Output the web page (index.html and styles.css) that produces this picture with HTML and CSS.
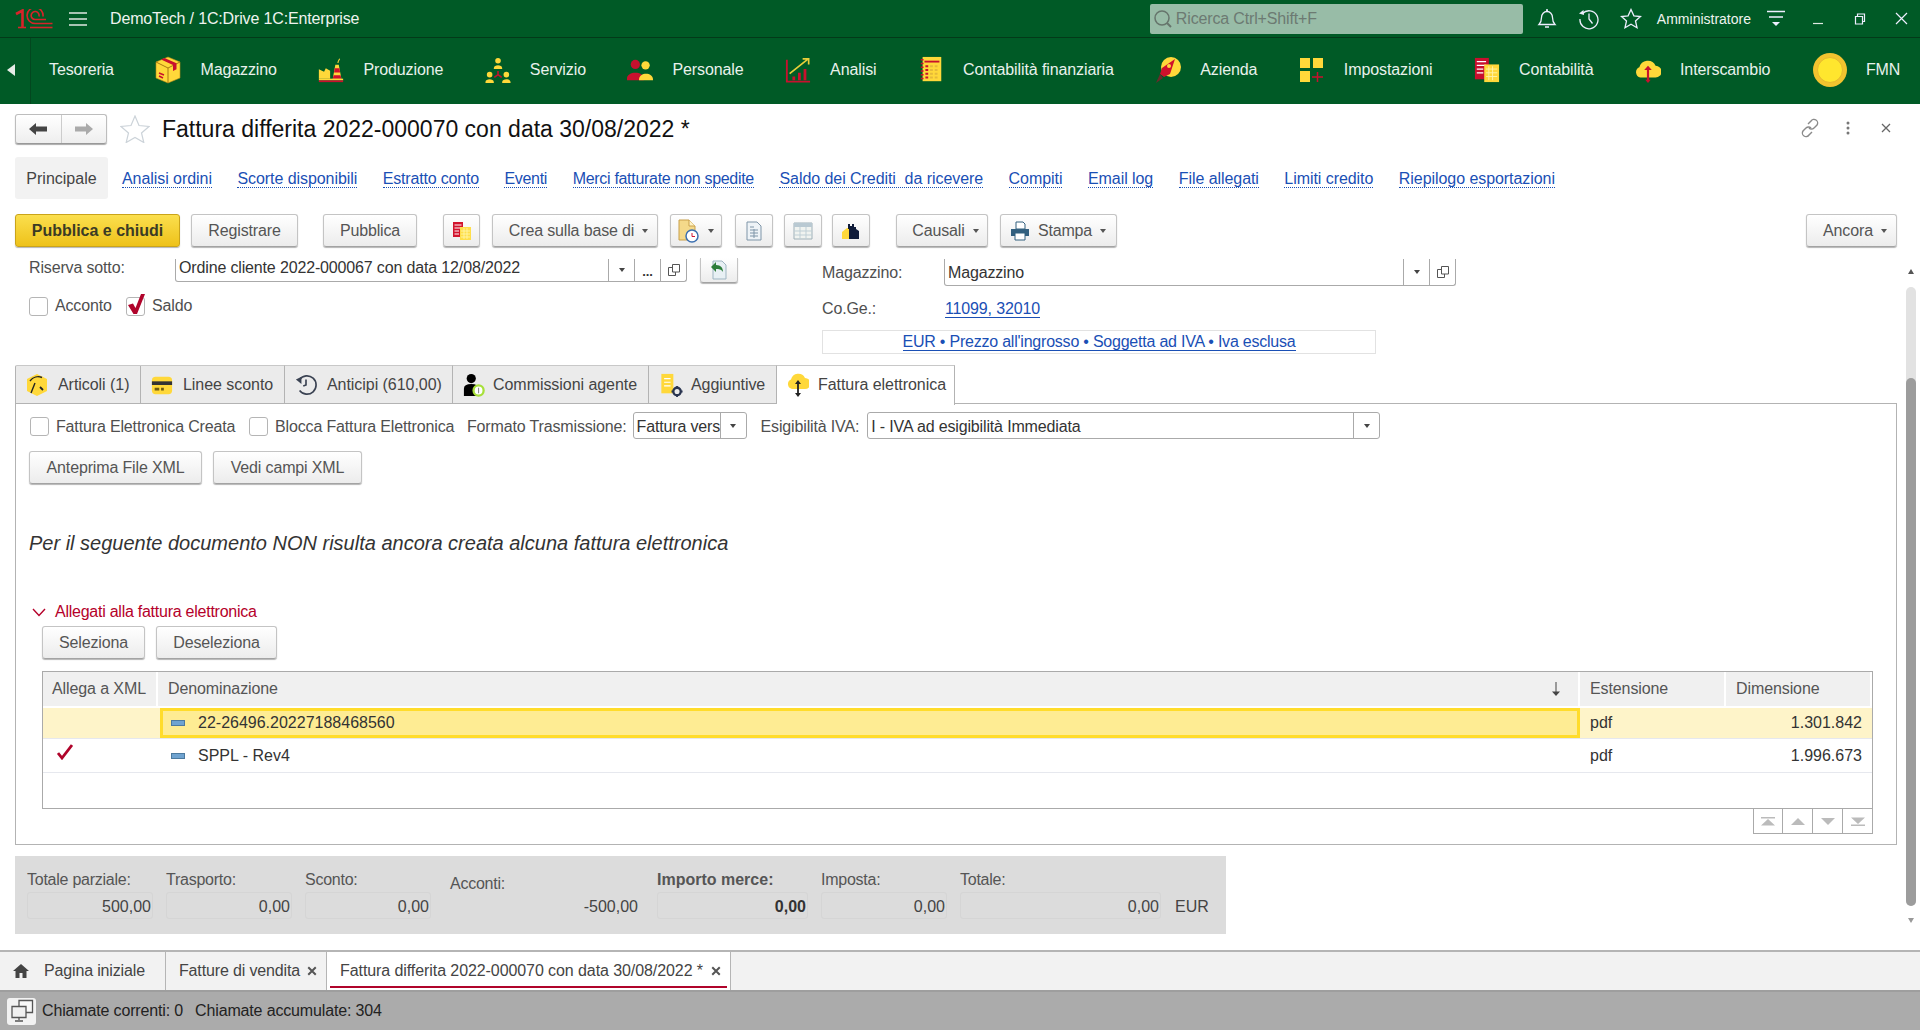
FILE: index.html
```html
<!DOCTYPE html>
<html lang="it">
<head>
<meta charset="utf-8">
<title>Fattura differita</title>
<link rel="stylesheet" href="styles.css">
</head>
<body>
<header class="topbar">
  <svg class="logo" viewBox="0 0 38 20" fill="none" stroke="#d8232a" stroke-width="1.600"><path d="M1 5 7.500 1.500V18" stroke-width="2.600"/><path d="M3 18.500H11" stroke-width="1.600"/><path d="M28 7.500A8 8 0 1 0 20 14.500H37.500"/><path d="M24 7.500A4 4 0 1 0 20 10.500H31"/><path d="M15 18.500H37.500"/></svg>
  <svg class="burger" viewBox="0 0 18 14" stroke="#dfe8e2" stroke-width="1.500"><path d="M0 1H18M0 7H18M0 13H18"/></svg>
  <span class="app-title">DemoTech / 1C:Drive 1C:Enterprise</span>
  <div class="search">
    <svg class="search-ico" viewBox="0 0 20 20" fill="none" stroke="#66756c" stroke-width="1.500"><circle cx="9" cy="9" r="7"/><path d="m14 14 4 4" stroke-width="2"/></svg>
    <span>Ricerca Ctrl+Shift+F</span>
  </div>
  <svg class="top-ico bell" viewBox="0 0 20 20" fill="none" stroke="#eef" stroke-width="1.300"><path d="M2 15.500c2-2 2.500-3 2.500-7C4.500 5 7 2.500 10 2.500S15.500 5 15.500 8.500c0 4 .5 5 2.500 7ZM9 1h2M8 18h4"/></svg>
  <svg class="top-ico hist" viewBox="0 0 22 22" fill="none" stroke="#eef" stroke-width="1.300"><path d="M4.500 5.500A9 9 0 1 1 2 11M11 5.500V11l3.500 4.500"/><path d="M1 5.500 5.500 2l.5 5Z" fill="#eef" stroke="none"/></svg>
  <svg class="top-ico tstar" viewBox="0 0 22 22" fill="none" stroke="#eef" stroke-width="1.300"><path d="m11 1.500 2.900 6.300 6.600.7-5 4.500 1.500 6.800L11 16.300l-6 3.500 1.500-6.800-5-4.500 6.600-.7Z"/></svg>
  <span class="user">Amministratore</span>
  <svg class="top-ico filt" viewBox="0 0 18 18" stroke="#eef" stroke-width="1.300"><path d="M0 1.500H18M2 7H16"/><path d="M5 12H13L9 16Z" fill="#eef" stroke="none"/></svg>
  <svg class="win-ico min" viewBox="0 0 12 12" stroke="#dfe8e2" stroke-width="1.200"><path d="M1 10.500H11"/></svg>
  <svg class="win-ico rest" viewBox="0 0 12 12" fill="none" stroke="#eef" stroke-width="1.200"><path d="M1.500 3.500H8.500V11H1.500ZM3.500 3.500V1H10.500V8.500H8.500"/></svg>
  <svg class="win-ico close" viewBox="0 0 13 13" stroke="#eef" stroke-width="1.200"><path d="m1 1 11 11M12 1 1 12"/></svg>
</header>

<nav class="nav">
  <div class="nav-back"><span class="tri-left"></span></div>
  <a class="nav-item first"><span>Tesoreria</span></a>
  <a class="nav-item">
    <svg viewBox="0 0 26 28"><path d="M13 1 25 6v16l-12 5L1 22V6Z" fill="#ffd83a" stroke="#b98a1a" stroke-width=".6"/><path d="M13 12v15M1 6l12 6 12-6" stroke="#a97a10" fill="none"/><path d="m6 3.500 12 5.500 3.500-1.800L9.500 2ZM18 9v6l3.500-1.800V7.200Z" fill="#c8102e"/><path d="M4 17l5 2M4 20l4 2" stroke="#c8102e" stroke-width="1.500"/></svg>
    <span>Magazzino</span></a>
  <a class="nav-item">
    <svg viewBox="0 0 30 30"><path d="M1 14l6 3 2-4 5 3v9H1Z" fill="#ffd83a"/><path d="M17 25 20 9h4l3 16Z" fill="#ffd83a"/><path d="M19.300 13h5.400l.8 5h-7ZM18 21h8l1 4H17Z" fill="#d0102c"/><path d="M23 7c0-2 1-3 2-5" stroke="#ffd83a" stroke-width="1.200" fill="none"/><path d="M1 25H29V27H1Z" fill="#ffd83a"/><path d="M1 27H29V29H1Z" fill="#c8102e"/></svg>
    <span>Produzione</span></a>
  <a class="nav-item">
    <svg viewBox="0 0 28 28"><g fill="#ffd83a"><circle cx="14" cy="4" r="3"/><path d="M9.500 12c0-4 9-4 9 0v1h-9Z"/><circle cx="5" cy="19" r="3"/><path d="M.5 27c0-4 9-4 9 0v1h-9Z"/><circle cx="23" cy="19" r="3"/><path d="M18.500 27c0-4 9-4 9 0v1h-9Z"/></g><path d="M14 15v4l-4 3M14 19l4 3" stroke="#c8102e" stroke-width="1.600" fill="none"/></svg>
    <span>Servizio</span></a>
  <a class="nav-item">
    <svg viewBox="0 0 28 26"><circle cx="9" cy="7" r="5" fill="#c8102e"/><path d="M0 22c0-8 18-8 18 0v2H0Z" fill="#c8102e"/><circle cx="20" cy="8" r="4.500" fill="#ffd83a"/><path d="M13 23c0-8 15-8 15 0v1H13Z" fill="#ffd83a"/></svg>
    <span>Personale</span></a>
  <a class="nav-item">
    <svg viewBox="0 0 28 28"><path d="M2 3V26.500H27" stroke="#c8102e" stroke-width="2" fill="none"/><path d="M5 18 25 2M19 2h6.500v6" stroke="#e8cf3a" stroke-width="1.800" fill="none"/><path d="M8 21h3v4H8ZM14 17h3v8h-3ZM20 13h3v12h-3Z" fill="#c8102e"/></svg>
    <span>Analisi</span></a>
  <a class="nav-item">
    <svg viewBox="0 0 24 30"><path d="M3 1H23V27H3Z" fill="#ffd83a"/><path d="M1 4H4M1 8H4M1 12H4M1 16H4M1 20H4M1 24H4" stroke="#c8102e" stroke-width="1.600"/><path d="M5 5H21V7H5Z" fill="#c8102e"/><path d="M6 10h3v2H6ZM6 14h3v2H6ZM6 18h3v2H6ZM6 22h3v2H6Z" fill="#c8102e"/><path d="M11 10h3v2h-3ZM16 10h3v2h-3ZM11 14h3v2h-3ZM16 14h3v2h-3ZM11 18h3v2h-3ZM16 18h3v2h-3ZM11 22h3v2h-3ZM16 22h3v2h-3Z" fill="#e5b93a"/></svg>
    <span>Contabilità finanziaria</span></a>
  <a class="nav-item">
    <svg viewBox="0 0 26 28"><circle cx="16" cy="11" r="10" fill="#ffd83a"/><path d="M20 3 7 12l-2 6 4 3 6-3Z" fill="#d0102c"/><circle cx="14" cy="10" r="2" fill="#ffd83a"/><path d="M5 18 1 27l7-5Z" fill="#6a2b2b"/></svg>
    <span>Azienda</span></a>
  <a class="nav-item">
    <svg viewBox="0 0 26 26"><path d="M1 1H11V11H1ZM14 1H24V11H14ZM1 14H11V25H1Z" fill="#ffd83a"/><path d="M18.500 15V25M13 20H24" stroke="#c8102e" stroke-width="1.500"/></svg>
    <span>Impostazioni</span></a>
  <a class="nav-item">
    <svg viewBox="0 0 28 28"><path d="M1 1H16V24H1Z" fill="#c8102e"/><path d="M3 5H13M3 9H13M3 13H10M3 17H10" stroke="#fff" stroke-width="1.400"/><path d="M11 8H27V27H11Z" fill="#ffd83a"/><path d="M13 13H25M13 17H25M13 21H25M16 10V25M20 10V25" stroke="#fff3a8" stroke-width="1"/></svg>
    <span>Contabilità</span></a>
  <a class="nav-item">
    <svg viewBox="0 0 24 24"><path d="M5 19A5 5 0 0 1 4 9.500 8 8 0 0 1 19 8a5.500 5.500 0 0 1 0 11Z" fill="#ffd83a"/><path d="M12 10V23" stroke="#c8102e" stroke-width="2"/><path d="M8.500 12 12 8l3.500 4ZM9.500 21h5l-2.500 3Z" fill="#c8102e"/></svg>
    <span>Interscambio</span></a>
  <a class="nav-item coin">
    <svg viewBox="0 0 36 36"><circle cx="18" cy="18" r="17" fill="#f2c32f"/><circle cx="18" cy="18" r="12.500" fill="#ffe62e" stroke="#e5b92f"/></svg>
    <span>FMN</span></a>
</nav>

<main class="page">
  <div class="title-row">
    <div class="hist-nav">
      <button class="hist-btn"><svg viewBox="0 0 18 14"><path d="M0 7 7 1v3.500H18v5H7V13Z" fill="#444"/></svg></button>
      <button class="hist-btn"><svg viewBox="0 0 18 14"><path d="M18 7 11 1v3.500H0v5H11V13Z" fill="#aaa"/></svg></button>
    </div>
    <svg class="fav" viewBox="0 0 30 28" fill="none" stroke="#ccd3d9" stroke-width="1.200"><path d="m15 1 4 9.500 10 1-7.500 6.500 2.300 9.500L15 22.500 6.200 27.500 8.500 18 1 11.500l10-1Z"/></svg>
    <h1 class="doc-title">Fattura differita 2022-000070 con data 30/08/2022 *</h1>
    <div class="title-tools">
      <svg class="tt-link" viewBox="0 0 20 20" fill="none" stroke="#8a8a8a" stroke-width="1.400"><path d="m8 6 3-3a3.500 3.500 0 0 1 6 4l-3 3a3.500 3.500 0 0 1-5 0"/><path d="m12 14-3 3a3.500 3.500 0 0 1-6-4l3-3a3.500 3.500 0 0 1 5 0"/></svg>
      <svg class="tt-dots" viewBox="0 0 4 14" fill="#777"><circle cx="2" cy="2" r="1.500"/><circle cx="2" cy="7" r="1.500"/><circle cx="2" cy="12" r="1.500"/></svg>
      <svg class="tt-x" viewBox="0 0 10 10" stroke="#666" stroke-width="1.300"><path d="m1 1 8 8M9 1 1 9"/></svg>
    </div>
  </div>

  <div class="section-links">
    <span class="section-current">Principale</span>
    <a class="sec">Analisi ordini</a>
    <a class="sec">Scorte disponibili</a>
    <a class="sec mid">Estratto conto</a>
    <a class="sec tight">Eventi</a>
    <a class="sec tight">Merci fatturate non spedite</a>
    <a class="sec">Saldo dei Crediti  da ricevere</a>
    <a class="sec">Compiti</a>
    <a class="sec">Email log</a>
    <a class="sec">File allegati</a>
    <a class="sec">Limiti credito</a>
    <a class="sec">Riepilogo esportazioni</a>
  </div>

  <div class="toolbar">
    <button class="btn primary">Pubblica e chiudi</button>
    <button class="btn b-reg">Registrare</button>
    <button class="btn b-pub">Pubblica</button>
    <button class="btn icon b-ic1">
      <svg viewBox="0 0 20 20"><path d="M1 1H11V16H1Z" fill="#d2142e"/><path d="M2.500 4H9.500M2.500 7H9.500M2.500 10H7M2.500 13H7" stroke="#fff"/><path d="M8 6H19V19H8Z" fill="#ffdf4a"/><path d="M9 10H18M9 13H18M9 16H18M12 7V18M15 7V18" stroke="#fff6b0" stroke-width=".8"/></svg>
    </button>
    <button class="btn drop crea">Crea sulla base di<i class="caret"></i></button>
    <button class="btn drop ico-drop">
      <svg viewBox="0 0 22 24"><path d="M1 1H11L17 7V21H1Z" fill="#f4d98a" stroke="#c9a04a"/><path d="M11 1V7H17" fill="#fff3c8" stroke="#c9a04a"/><circle cx="14" cy="17" r="6" fill="#fff" stroke="#3b6fb0" stroke-width="1.500"/><path d="M14 14v3.500h3" stroke="#d2142e" fill="none"/></svg>
      <i class="caret"></i></button>
    <button class="btn icon b-ic2">
      <svg viewBox="0 0 18 20" fill="none" stroke="#7f95a8"><path d="M2 1H12L16 5V19H2Z" fill="#eef3f7"/><path d="M5 6H9M5 9H13M5 12H13M5 15H13M9 8V17"/></svg>
    </button>
    <button class="btn icon">
      <svg viewBox="0 0 20 18"><path d="M1 1H19V17H1Z" fill="#f0f3f0" stroke="#9fb0b8"/><path d="M1 1H19V5H1Z" fill="#b9c9d2"/><path d="M1 9H19M1 13H19M7 5V17M13 5V17" stroke="#bfcfd6"/></svg>
    </button>
    <button class="btn icon b-ic4">
      <svg viewBox="0 0 20 18"><path d="M1 10 6 6h4v11H1Z" fill="#ffd83a"/><path d="M7 7V2h2v2h2V2h2v3h2V7l3 2v8H8V7Z" fill="#101c3a"/></svg>
    </button>
    <button class="btn drop causali">Causali<i class="caret"></i></button>
    <button class="btn drop stampa">
      <svg viewBox="0 0 20 20"><path d="M6 1H13L15 3V8H6Z" fill="#fff" stroke="#33607f"/><path d="M1 8H19V15H1Z" fill="#33607f"/><path d="M5 12H15V19H5Z" fill="#fff" stroke="#33607f"/></svg>
      Stampa<i class="caret"></i></button>
    <button class="btn drop ancora">Ancora<i class="caret"></i></button>
  </div>

  <div class="head-form">
    <div class="head-left">
      <div class="form-row">
        <label class="lbl riserva">Riserva sotto:</label>
        <div class="field no-top riserva-f">
          <span class="val">Ordine cliente 2022-000067 con data 12/08/2022</span>
          <span class="fbtn"><i class="caret"></i></span>
          <span class="fbtn dots">...</span>
          <span class="fbtn"><svg class="open" viewBox="0 0 12 12" fill="none" stroke="#555"><path d="M4.500 .5H11.500V8H4.500ZM4.500 3.500H.5V11.500H7.500V8"/></svg></span>
        </div>
        <button class="btn mini">
          <svg viewBox="0 0 18 20"><path d="M3 1H12L16 5V19H3Z" fill="#e8f0f4" stroke="#9fb5c2"/><path d="M1 7 6 2v3c5 0 7 3 7 7-2-3-4-3-7-3v3Z" fill="#2d7d3a"/></svg>
        </button>
      </div>
      <div class="checks">
        <label class="chk"><i class="box"></i>Acconto</label>
        <label class="chk"><i class="box"><svg viewBox="0 0 18 22"><path d="M1 11 6 9.500 8.500 14 14 0H18L10 20H6.500Z" fill="#b0042b"/></svg></i>Saldo</label>
      </div>
    </div>
    <div class="head-right">
      <div class="form-row">
        <label class="lbl maga">Magazzino:</label>
        <div class="field no-top maga-f">
          <span class="val">Magazzino</span>
          <span class="fbtn"><i class="caret"></i></span>
          <span class="fbtn"><svg class="open" viewBox="0 0 12 12" fill="none" stroke="#555"><path d="M4.500 .5H11.500V8H4.500ZM4.500 3.500H.5V11.500H7.500V8"/></svg></span>
        </div>
      </div>
      <div class="form-row coge">
        <label class="lbl maga">Co.Ge.:</label>
        <a class="link coge-link">11099, 32010</a>
      </div>
      <div class="price-box"><a class="link">EUR • Prezzo all'ingrosso • Soggetta ad IVA • Iva esclusa</a></div>
    </div>
  </div>

  <div class="tabs">
    <div class="tab t-art">
      <svg viewBox="0 0 22 24"><path d="M11 1 21 6v12l-10 5L1 18V6Z" fill="#ffd83a"/><path d="M4 8C7 4 12 3 16 4.500M9 10 5 20" stroke="#222" stroke-width="1.400" fill="none"/><path d="M14 14l3 3" stroke="#222" stroke-width="1.800"/></svg>
      Articoli (1)</div>
    <div class="tab t-lin">
      <svg viewBox="0 0 24 22"><path d="M1 6q0-4 4-4H19q4 0 4 4V17q0 4-4 4H5q-4 0-4-4Z" fill="#ffd83a"/><path d="M1 7H23V11H1Z" fill="#333"/><path d="M4 14H9V17H4ZM11 14H14V17H11Z" fill="#6e5b12"/></svg>
      Linee sconto</div>
    <div class="tab t-ant">
      <svg viewBox="0 0 24 24" fill="none" stroke="#3a4252" stroke-width="1.800"><path d="M5 6A10 10 0 1 1 5 18"/><path d="M12 6V12L9 13"/><path d="M1 6 7 3 7 11Z" fill="#3a4252" stroke="none"/></svg>
      Anticipi (610,00)</div>
    <div class="tab t-agent">
      <svg viewBox="0 0 24 26"><circle cx="9" cy="6" r="5" fill="#000"/><path d="M1 25V17q0-5 8-5t8 5v8Z" fill="#000"/><circle cx="17" cy="19" r="5.500" fill="#fff" stroke="#a7e03a" stroke-width="2.500"/><path d="M17 16V22" stroke="#777"/></svg>
      Commissioni agente</div>
    <div class="tab t-add">
      <svg viewBox="0 0 26 26"><path d="M2 1H15V22H2Z" fill="#ffd83a"/><path d="M5 6H12M5 10H12M5 14H12" stroke="#fff" stroke-width="1.300"/><circle cx="19" cy="20" r="4" fill="none" stroke="#2a3550" stroke-width="2.500"/><path d="M19 14V16M19 24V26M13 20H15M23 20H25" stroke="#2a3550" stroke-width="2"/></svg>
      Aggiuntive</div>
    <div class="tab active">
      <svg viewBox="0 0 22 24"><path d="M5 16A5 5 0 0 1 4 6.500 7.500 7.500 0 0 1 18 5a5.500 5.500 0 0 1 0 11Z" fill="#ffd83a"/><path d="M11 10V22" stroke="#222" stroke-width="1.800"/><path d="M8 11 11 7l3 4ZM8 20h6l-3 4Z" fill="#222"/></svg>
      Fattura elettronica</div>
  </div>

  <section class="panel">
    <div class="pf-row">
      <label class="chk c-crea"><i class="box"></i>Fattura Elettronica Creata</label>
      <label class="chk blocca"><i class="box"></i>Blocca Fattura Elettronica</label>
      <label class="lbl formato">Formato Trasmissione:</label>
      <div class="field formato-f"><span class="val">Fattura vers</span><span class="fbtn wide"><i class="caret"></i></span></div>
      <label class="lbl esig">Esigibilità IVA:</label>
      <div class="field esig-f"><span class="val">I - IVA ad esigibilità Immediata</span><span class="fbtn wide"><i class="caret"></i></span></div>
    </div>
    <div class="pf-buttons">
      <button class="btn b-ant">Anteprima File XML</button>
      <button class="btn b-ved">Vedi campi XML</button>
    </div>
    <p class="notice">Per il seguente documento NON risulta ancora creata alcuna fattura elettronica</p>
    <div class="group-head">
      <svg viewBox="0 0 14 9" fill="none" stroke="#b5002a" stroke-width="1.400"><path d="m1 1 6 6.500L13 1"/></svg>
      <span>Allegati alla fattura elettronica</span>
    </div>
    <div class="group-body">
      <div class="gb-buttons">
        <button class="btn b-sel">Seleziona</button>
        <button class="btn b-des">Deseleziona</button>
      </div>
      <div class="grid">
        <div class="g-row g-head">
          <div class="g-cell">Allega a XML</div>
          <div class="g-cell g-sort">Denominazione<svg class="sort-arrow" viewBox="0 0 8 14" fill="#444"><path d="M3.500 0H4.500V10H3.500Z"/><path d="M0 9.500H8L4 14Z"/></svg></div>
          <div class="g-cell">Estensione</div>
          <div class="g-cell">Dimensione</div>
        </div>
        <div class="g-row selected">
          <div class="g-cell"></div>
          <div class="g-cell current"><i class="row-ico"></i>22-26496.20227188468560</div>
          <div class="g-cell">pdf</div>
          <div class="g-cell num">1.301.842</div>
        </div>
        <div class="g-row g-second">
          <div class="g-cell"><svg class="tick" viewBox="0 0 16 16" fill="none" stroke="#b0042b" stroke-width="2.800"><path d="m1 9 4 5L15 1"/></svg></div>
          <div class="g-cell name"><i class="row-ico"></i>SPPL - Rev4</div>
          <div class="g-cell">pdf</div>
          <div class="g-cell num">1.996.673</div>
        </div>
      </div>
      <div class="pager">
        <span class="pg"><svg viewBox="0 0 14 9" fill="#bbb"><path d="M0 0H14V1.500H0ZM7 2 14 8.500H0Z"/></svg></span>
        <span class="pg"><svg viewBox="0 0 14 9" fill="#bbb"><path d="M7 1 14 8H0Z"/></svg></span>
        <span class="pg"><svg viewBox="0 0 14 9" fill="#bbb"><path d="M7 8 14 1H0Z"/></svg></span>
        <span class="pg"><svg viewBox="0 0 14 9" fill="#bbb"><path d="M0 7.500H14V9H0ZM7 7 14 .5H0Z"/></svg></span>
      </div>
    </div>
  </section>

  <section class="summary">
    <div class="sum-f f126"><span class="sum-l">Totale parziale:</span><span class="sum-v">500,00</span></div>
    <div class="sum-f f126"><span class="sum-l">Trasporto:</span><span class="sum-v">0,00</span></div>
    <div class="sum-f f126"><span class="sum-l">Sconto:</span><span class="sum-v">0,00</span></div>
    <div class="sum-f acc"><span class="sum-l low">Acconti:</span><span class="sum-v plain">-500,00</span></div>
    <div class="sum-f imp"><span class="sum-l strong">Importo merce:</span><span class="sum-v strong">0,00</span></div>
    <div class="sum-f f126"><span class="sum-l">Imposta:</span><span class="sum-v">0,00</span></div>
    <div class="sum-f tot"><span class="sum-l">Totale:</span><span class="sum-v">0,00</span></div>
    <span class="cur">EUR</span>
  </section>

  <div class="scrollbar">
    <i class="sb-up"></i>
    <div class="sb-track"><div class="sb-thumb"></div></div>
    <i class="sb-down"></i>
  </div>
</main>

<div class="win-tabs">
  <div class="wt home"><svg viewBox="0 0 16 14"><path d="M8 0 16 7H13.500V14H9.500V9H6.500V14H2.500V7H0Z" fill="#444"/></svg>Pagina iniziale</div>
  <div class="wt list">Fatture di vendita<svg class="wx" viewBox="0 0 8 8" stroke="#555" stroke-width="1.600"><path d="m1 1 6 6M7 1 1 7"/></svg></div>
  <div class="wt active">Fattura differita 2022-000070 con data 30/08/2022 *<svg class="wx" viewBox="0 0 8 8" stroke="#555" stroke-width="1.600"><path d="m1 1 6 6M7 1 1 7"/></svg></div>
</div>

<footer class="status">
  <span class="st-btn"><svg viewBox="0 0 24 24" fill="none" stroke="#555" stroke-width="1.300"><path d="M9 1.500H22.500V13.500H9Z" fill="#f8f8f8"/><path d="M2 7.500H16V18.500H2Z" fill="#f0f0f0"/><path d="M9 18.500V21M5 22H13"/></svg></span>
  <span class="st-text">Chiamate correnti: 0</span>
  <span class="st-text">Chiamate accumulate: 304</span>
</footer>
</body>
</html>
```

FILE: styles.css
```css
* { box-sizing: border-box; }
html, body { margin: 0; height: 1030px; overflow: hidden; }
body {
  display: flex; flex-direction: column; width: 1920px;
  font: 16px/20px "Liberation Sans", Arial, sans-serif; color: #444; background: #fff;
  letter-spacing: -.15px;
}
svg { display: block; flex: none; }

/* top bar */
.topbar {
  height: 38px; background: #005a26; border-bottom: 1px solid #033a19;
  display: flex; align-items: center; color: #eef3ef; flex: none; padding-right: 12px;
}
.logo { width: 38px; height: 20px; margin-left: 15px; }
.burger { width: 18px; height: 14px; margin-left: 16px; }
.app-title { margin-left: 23px; }
.search {
  margin-left: auto; width: 373px; height: 30px; background: #98bca7; border-radius: 2px;
  display: flex; align-items: center; color: #6c7a72; padding-left: 3px; margin-right: 14px;
}
.search-ico { width: 20px; height: 20px; margin-right: 3px; }
.top-ico { width: 20px; height: 20px; }
.hist { width: 22px; height: 22px; margin-left: 21px; }
.tstar { width: 22px; height: 22px; margin-left: 20px; }
.user { font-size: 14px; margin-left: 15px; letter-spacing: 0; }
.filt { width: 18px; height: 18px; margin-left: 16px; }
.win-ico { width: 12px; height: 12px; }
.min { margin-left: 27px; }
.rest { margin-left: 30px; }
.close { width: 13px; height: 13px; margin-left: 29px; }

/* main nav */
.nav {
  height: 66px; background: #005a26; display: flex; align-items: center; flex: none; color: #e9f1ec;
  gap: 41.500px; letter-spacing: -.1px;
}
.nav-back { width: 31px; height: 100%; border-right: 1px solid #03471f; display: flex; align-items: center; justify-content: center; margin-right: -23.500px; }
.tri-left { border: 6px solid transparent; border-right: 8px solid #e6ede8; border-left: 0; margin-left: -8px; margin-top: -2px; }
.nav-item { display: flex; align-items: center; gap: 19px; margin-top: -2px; white-space: nowrap; }
.nav-item svg { width: 26px; height: 28px; }
.nav-item.coin { gap: 18px; }
.nav-item.coin svg { width: 36px; height: 36px; }

/* page */
.page { flex: 1; position: relative; padding: 10px 23px 0 15px; min-height: 0; background: #fff; }
.title-row { display: flex; align-items: center; height: 30px; }
.hist-nav { display: flex; width: 92px; height: 30px; border: 1px solid #bdbdbd; border-bottom-color: #999; border-radius: 3px; background: linear-gradient(#fff, #eee); box-shadow: 0 1px 1px #aaa; }
.hist-btn { flex: 1; border: 0; background: none; padding: 0; display: flex; align-items: center; justify-content: center; }
.hist-btn + .hist-btn { border-left: 1px solid #ccc; }
.hist-btn svg { width: 18px; height: 14px; }
.fav { width: 30px; height: 28px; margin-left: 13px; }
.doc-title { margin: 0 0 0 12px; font-size: 23px; font-weight: 400; color: #111; line-height: 30px; letter-spacing: 0; }
.title-tools { margin-left: auto; display: flex; align-items: center; margin-right: 6px; margin-top: -2px; }
.tt-link { width: 20px; height: 20px; margin-right: -1px; }
.tt-dots { width: 4px; height: 14px; margin-left: 27px; }
.tt-x { width: 10px; height: 10px; margin-left: 31px; }

.section-links { display: flex; align-items: center; height: 42px; margin-top: 13px; }
.section-current { background: #f2f2f2; border-radius: 3px; height: 42px; width: 93px; display: flex; align-items: center; justify-content: center; color: #444; padding-top: 1px; letter-spacing: 0; }
.sec { color: #1a4fb5; border-bottom: 1px dotted #1a4fb5; line-height: 17px; margin: 2px 0 0 25.500px; white-space: pre; letter-spacing: -.06px; }
.sec.mid { letter-spacing: -.18px; }
.sec.tight { letter-spacing: -.3px; }
.section-current + .sec { margin-left: 14px; }

.toolbar { display: flex; height: 33px; margin-top: 15px; gap: 11px; }
.btn {
  font: inherit; letter-spacing: inherit; color: #555; height: 33px; padding: 0 16px; display: inline-flex; align-items: center; justify-content: center;
  border: 1px solid #c4c4c4; border-bottom-color: #a3a3a3; border-radius: 3px;
  background: linear-gradient(#fff, #ececec); box-shadow: 0 1px 1px #b5b5b5; white-space: nowrap;
}
.btn.primary { width: 165px; background: linear-gradient(#fbdf4e, #eec21a); border-color: #caa41a; color: #3b3b25; font-weight: 700; padding: 0; letter-spacing: 0; }
.b-reg { width: 107px; }
.b-pub { width: 94px; margin-left: 14px; }
.btn.icon { width: 38px; padding: 0; }
.btn.icon svg { width: 20px; height: 20px; }
.btn.b-ic1 { width: 37px; margin-left: 15px; }
.btn.b-ic2 { margin-left: 2px; }
.btn.b-ic4 { margin-left: -1px; }
.caret { display: inline-block; border: 3.5px solid transparent; border-top: 4px solid #555; border-bottom: 0; }
.drop { gap: 8px; padding: 0 9px 0 16px; }
.crea { width: 166px; margin-left: 1px; }
.ico-drop { width: 52px; padding: 0 10px; margin-left: 1px; }
.ico-drop svg { width: 22px; height: 24px; }
.causali { width: 92px; margin-left: 15px; }
.stampa { width: 117px; margin-left: 1px; }
.stampa svg { width: 20px; height: 20px; margin-left: -8px; margin-right: 0; }
.ancora { margin-left: auto; width: 91px; }

/* head form */
.head-form { display: flex; height: 107px; margin-top: 11px; padding-left: 14px; }
.head-left { width: 793px; }
.head-right { flex: 1; padding-top: 1px; }
.form-row { display: flex; align-items: center; }
.lbl { color: #4f4f4f; white-space: nowrap; }
.riserva { width: 146px; margin-top: -5px; }
.maga { width: 122px; }
.field { display: flex; align-items: stretch; height: 27px; border: 1px solid #aaa; border-radius: 3px; background: #fff; color: #333; }
.no-top { border-top: 0; border-radius: 0 0 3px 3px; }
.riserva-f { width: 512px; height: 23px; }
.riserva-f .val { margin-top: -5px; }
.maga-f { width: 512px; }
.maga-f .val { padding-top: 1px; }
.val { flex: 1; padding-left: 3px; align-self: center; white-space: nowrap; overflow: hidden; }
.fbtn { width: 26px; border-left: 1px solid #aaa; display: flex; align-items: center; justify-content: center; flex: none; }
.fbtn .caret { border-top-color: #444; }
.dots { align-items: flex-end; font-weight: 700; font-size: 13px; line-height: 19px; }
.open { width: 12px; height: 12px; }
.btn.mini { width: 38px; height: 25px; padding: 0; margin-left: 13px; border-top: 0; border-radius: 0 0 3px 3px; }
.btn.mini svg { width: 18px; height: 20px; }
.checks { display: flex; margin-top: 13px; }
.chk { display: flex; align-items: center; white-space: nowrap; color: #4f4f4f; }
.checks .chk { width: 97px; }
.box { display: block; width: 19px; height: 19px; border: 1px solid #b5b5b5; border-radius: 3px; background: #fff; margin-right: 7px; position: relative; flex: none; }
.box svg { width: 18px; height: 22px; margin-top: -4px; }
.coge { height: 20px; margin-top: 13px; }
.link { color: #1a4fb5; border-bottom: 1px solid #1a4fb5; line-height: 17px; }
.coge-link { margin-left: 1px; }
.price-box { width: 554px; height: 24px; margin-top: 11px; border: 1px solid #e2e2e2; display: flex; align-items: center; justify-content: center; letter-spacing: -.22px; }

/* tabs */
.tabs { display: flex; height: 39px; position: relative; z-index: 1; letter-spacing: -.05px; }
.tab {
  display: flex; align-items: center; gap: 10px; padding: 0 0 0 10px; background: #ebebeb; color: #444; white-space: nowrap;
  border: 1px solid #b3b3b3; border-left: 0; border-top-color: #c8c8c8;
}
.tab:first-child { border-left: 1px solid #b3b3b3; border-radius: 2px 0 0 0; }
.tab svg { width: 22px; height: 24px; }
.t-art { width: 126px; }
.t-lin { width: 144px; }
.t-ant { width: 168px; }
.t-agent { width: 196px; gap: 8px; }
.t-add { width: 128px; gap: 7px; }
.tab.t-add svg { width: 25px; }
.tab.active { width: 178px; gap: 9px; background: #fff; border-bottom: 0; height: 40px; padding-bottom: 2px; }

.panel { height: 442px; margin-top: -1px; border: 1px solid #b3b3b3; padding: 8px 23px 0 13px; }
.pf-row { display: flex; align-items: center; height: 27px; }
.pf-row .chk, .pf-row .lbl { margin-top: 2px; }
.pf-row .val { padding-top: 2px; }
.c-crea { width: 220px; }
.c-crea .box { margin-left: 1px; }
.blocca { width: 218px; }
.formato { margin-right: 6px; }
.formato-f { width: 114px; }
.esig { margin-left: 14px; margin-right: 8px; }
.esig-f { width: 513px; }
.pf-buttons { display: flex; gap: 11px; margin-top: 12px; }
.b-ant { width: 173px; }
.b-ved { width: 149px; }
.notice { margin: 47px 0 0; font-size: 20px; line-height: 24px; font-style: italic; color: #333; letter-spacing: 0; }
.group-head { display: flex; align-items: center; gap: 9px; color: #b5002a; margin-top: 47px; margin-left: 3px; letter-spacing: -.25px; }
.group-head svg { width: 14px; height: 9px; }
.group-body { padding-left: 13px; margin-top: 4px; }
.gb-buttons { display: flex; gap: 11px; }
.b-sel { width: 103px; }
.b-des { width: 121px; }
.grid { height: 138px; margin-top: 12px; border: 1px solid #aaa; letter-spacing: 0; }
.g-row { display: grid; grid-template-columns: 115px 1422px 146px 1fr; border-bottom: 1px solid #e6e8ee; color: #333; }
.g-head { height: 36px; background: #f0f0f0; color: #555; border-bottom: 2px solid #fff; letter-spacing: -.1px; }
.g-head .g-cell { border-right: 2px solid #fff; padding-left: 10px; }
.g-head .g-cell:first-child { padding-left: 9px; }
.g-cell { display: flex; align-items: center; padding: 0 10px; white-space: nowrap; min-width: 0; }
.g-head .g-sort { justify-content: space-between; padding-right: 18px; }
.sort-arrow { width: 8px; height: 14px; }
.selected { height: 31px; background: #fef4c9; }
.g-second { height: 34px; }
.current { background: #feec93; border: 3px solid #ffdc2b; padding-left: 8px; margin-left: 2px; }
.name { padding-left: 13px; }
.num { justify-content: flex-end; padding-right: 10px; }
.row-ico { display: block; width: 14px; height: 6px; background: #6fa3d0; border: 1px solid #4c7a9f; margin-right: 13px; flex: none; }
.tick { width: 16px; height: 16px; margin-left: 4px; margin-top: -8px; }
.pager { display: flex; justify-content: flex-end; }
.pg { width: 30px; height: 25px; border: 1px solid #aaa; border-top: 0; border-left: 0; display: flex; align-items: center; justify-content: center; }
.pg:first-child { border-left: 1px solid #aaa; }
.pg svg { width: 14px; height: 9px; }

/* summary */
.summary { width: 1211px; height: 78px; margin-top: 11px; background: #dcdcdc; display: flex; gap: 13px; padding: 15px 0 0 12px; align-items: flex-start; }
.sum-f { display: flex; flex-direction: column; color: #555; }
.f126 { width: 126px; }
.acc { width: 188px; margin-left: 6px; }
.imp { width: 151px; margin-left: 6px; }
.tot { width: 201px; }
.sum-l { line-height: 18px; height: 21px; white-space: nowrap; letter-spacing: -.25px; }
.sum-l.low { position: relative; top: 4px; }
.sum-l.strong { font-weight: 700; letter-spacing: 0; }
.sum-v { height: 27px; border: 1px solid #d5d5d5; border-radius: 3px; text-align: right; padding: 4px 1px 0 0; color: #444; letter-spacing: 0; }
.sum-v.plain { border: 0; padding: 5px 0 0; }
.sum-v.strong { font-weight: 700; color: #333; }
.cur { margin-top: 26px; margin-left: 1px; color: #444; letter-spacing: 0; }

/* scrollbar */
.scrollbar { position: absolute; right: 4px; top: 163px; width: 10px; height: 656px; }
.sb-up, .sb-down { position: absolute; left: 2px; border: 3.5px solid transparent; }
.sb-up { top: 2px; border-bottom: 5px solid #555; border-top: 0; }
.sb-down { bottom: 0; border-top: 5px solid #999; border-bottom: 0; }
.sb-track { position: absolute; top: 20px; left: 0; right: 0; background: #e2e2e2; border-radius: 5px; height: 619px; }
.sb-thumb { position: absolute; top: 91px; bottom: 0; left: 0; right: 0; background: #9c9c9c; border-radius: 5px; }

/* window tabs */
.win-tabs { height: 40px; flex: none; display: flex; background: #f2f2f2; border-top: 2px solid #b5b5b5; color: #444; }
.wt { display: flex; align-items: center; white-space: nowrap; border-right: 1px solid #b5b5b5; }
.home { width: 166px; padding-left: 13px; gap: 15px; }
.home svg { width: 16px; height: 14px; }
.list { width: 161px; padding: 0 9px 0 13px; }
.wx { width: 10px; height: 10px; margin-left: auto; }
.wt.active { width: 404px; padding: 0 9px 0 13px; background: #fff; position: relative; letter-spacing: -.08px; }
.wt.active::after { content: ""; position: absolute; left: 3px; right: 3px; bottom: 2px; height: 2px; background: #b0042b; }

/* status */
.status { height: 40px; flex: none; background: #ababab; border-top: 2px solid #9e9e9e; display: flex; align-items: center; color: #222; padding-left: 7px; gap: 12px; }
.st-btn { width: 29px; height: 27px; background: #f2f2f2; border-radius: 3px; display: flex; align-items: center; justify-content: center; margin-right: -6px; }
.st-btn svg { width: 24px; height: 24px; }
```
